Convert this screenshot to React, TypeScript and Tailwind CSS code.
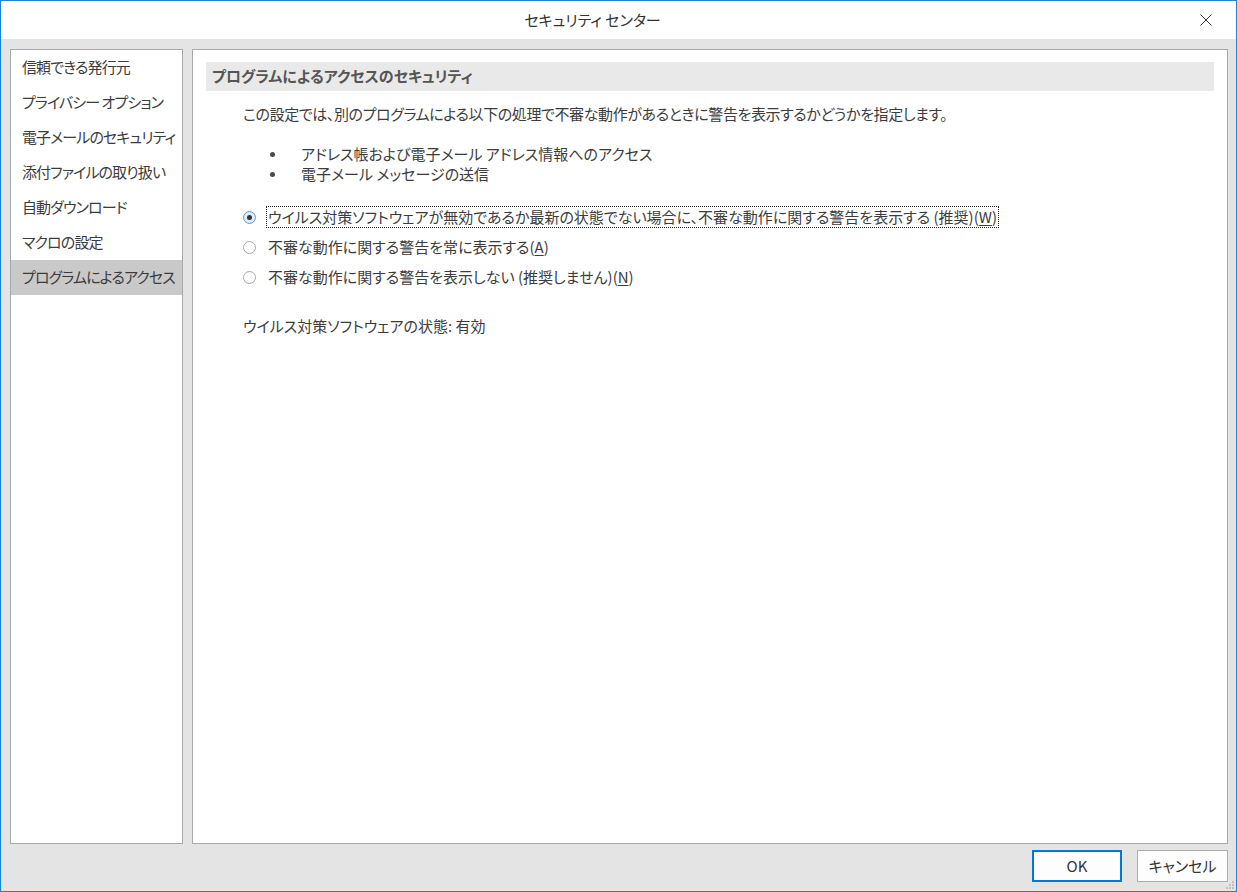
import { ReactNode } from 'react'

const navItems = [
  '信頼できる発行元',
  'プライバシー オプション',
  '電子メールのセキュリティ',
  '添付ファイルの取り扱い',
  '自動ダウンロード',
  'マクロの設定',
  'プログラムによるアクセス',
]

const Radio = ({ checked }: { checked?: boolean }) =>
  checked ? (
    <span className="w-[13px] h-[13px] rounded-full border border-[#5aa0db] bg-[#dcecf9] flex items-center justify-center shrink-0">
      <span className="w-[5px] h-[5px] rounded-full bg-[#333]" />
    </span>
  ) : (
    <span className="w-[13px] h-[13px] rounded-full border border-[#a8a8a8] bg-white shrink-0" />
  )

const Key = ({ k }: { k: string }) => <>(<span className="underline underline-offset-2">{k}</span>)</>

const Option = ({ checked, focused, children }: { checked?: boolean; focused?: boolean; children: ReactNode }) => (
  <div className="flex items-center h-[30px]">
    <Radio checked={checked} />
    <span className={`ml-[10px] px-[1px] leading-[20px] border whitespace-nowrap ${focused ? 'border-dotted border-[#222]' : 'border-transparent'}`}>
      {children}
    </span>
  </div>
)

const Bullet = ({ children }: { children: ReactNode }) => (
  <li className="flex items-center h-[20px]">
    <span className="w-[58px] pl-[27px] flex">
      <span className="w-[5px] h-[5px] rounded-full bg-[#4a4a4a]" />
    </span>
    {children}
  </li>
)

export default function App() {
  return (
    <div
      className="w-[1237px] h-[892px] border border-[#1883d7] flex flex-col text-[#3c3c3c] text-[15px] [font-feature-settings:'palt'] relative"
      style={{ fontFamily: '"Noto Sans CJK JP", "Noto Sans", sans-serif' }}
    >
      <div className="h-[38px] bg-white flex items-center justify-center pr-[52px] relative shrink-0">
        <span className="text-[#333]">セキュリティ センター</span>
        <svg className="absolute left-[1199px] top-[13px]" width="12" height="12" viewBox="0 0 12 12">
          <path d="M0.5 0.5 L11.5 11.5 M11.5 0.5 L0.5 11.5" stroke="#333" strokeWidth="1" fill="none" />
        </svg>
      </div>

      <div className="flex-1 bg-[#e4e4e4] pl-[9px] pr-[8px] pt-[10px] flex flex-col">
        <div className="flex gap-[9px] h-[795px]">
          <div className="w-[173px] bg-white border border-[#a9a9a9] flex flex-col">
            {navItems.map((item, i) => (
              <div
                key={item}
                className={`h-[35px] flex items-center pl-[11px] whitespace-nowrap tracking-[-0.9px] ${i === navItems.length - 1 ? 'bg-[#c9c9c9]' : ''}`}
              >
                {item}
              </div>
            ))}
          </div>

          <div className="flex-1 bg-white border border-[#a9a9a9] pt-[12px] px-[13px]">
            <div className="h-[29px] bg-[#e9e9e9] flex items-center pl-[6px] font-bold text-[#555]">
              プログラムによるアクセスのセキュリティ
            </div>
            <div className="pl-[37px]">
              <p className="mt-[13px] leading-[20px] tracking-[-0.4px]">
                この設定では、別のプログラムによる以下の処理で不審な動作があるときに警告を表示するかどうかを指定します。
              </p>
              <ul className="mt-[20px]">
                <Bullet>アドレス帳および電子メール アドレス情報へのアクセス</Bullet>
                <Bullet>電子メール メッセージの送信</Bullet>
              </ul>
              <div className="mt-[18px] flex flex-col">
                <Option checked focused>
                  ウイルス対策ソフトウェアが無効であるか最新の状態でない場合に、不審な動作に関する警告を表示する (推奨)<Key k="W" />
                </Option>
                <Option>
                  不審な動作に関する警告を常に表示する<Key k="A" />
                </Option>
                <Option>
                  不審な動作に関する警告を表示しない (推奨しません)<Key k="N" />
                </Option>
              </div>
              <p className="mt-[24px] leading-[20px]">ウイルス対策ソフトウェアの状態: 有効</p>
            </div>
          </div>
        </div>

        <div className="flex justify-end gap-[15px] mt-[6px]">
          <button className="w-[90px] h-[32px] border-2 border-[#0078d7] bg-[#fdfdfd] text-[#333]">OK</button>
          <button className="w-[91px] h-[32px] border border-[#adadad] bg-[#fdfdfd] text-[#333]">キャンセル</button>
        </div>
      </div>

      <div className="absolute right-[1px] bottom-[1px] w-[10px] h-[10px]">
        <span className="absolute right-[1px] bottom-[1px] w-[2px] h-[2px] bg-[#c0c0c0]" />
        <span className="absolute right-[4px] bottom-[1px] w-[2px] h-[2px] bg-[#c0c0c0]" />
        <span className="absolute right-[7px] bottom-[1px] w-[2px] h-[2px] bg-[#c0c0c0]" />
        <span className="absolute right-[1px] bottom-[4px] w-[2px] h-[2px] bg-[#c0c0c0]" />
        <span className="absolute right-[4px] bottom-[4px] w-[2px] h-[2px] bg-[#c0c0c0]" />
        <span className="absolute right-[1px] bottom-[7px] w-[2px] h-[2px] bg-[#c0c0c0]" />
      </div>
    </div>
  )
}
